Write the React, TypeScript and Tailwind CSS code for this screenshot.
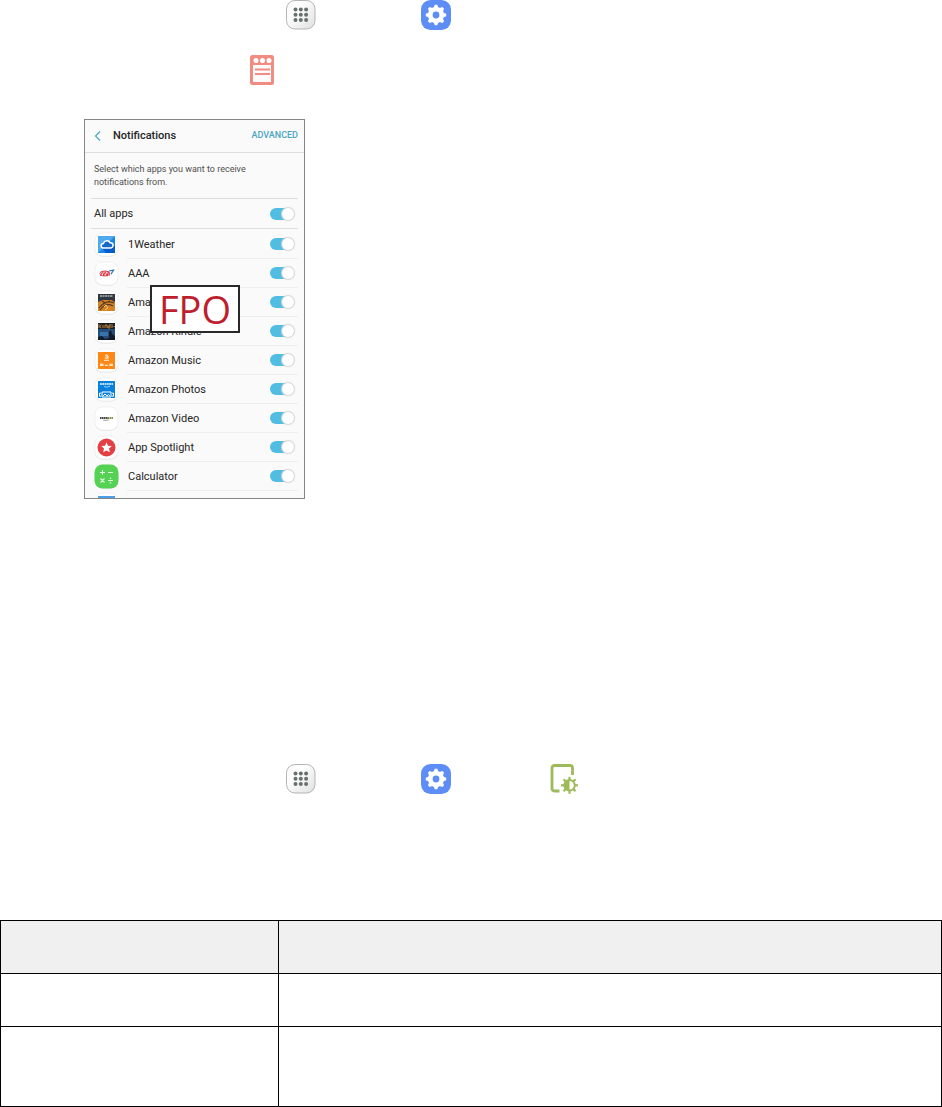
import React, { useState } from 'react';

const AppsIcon: React.FC = () => (
  <svg className="size-[30px]" viewBox="0 0 30 30" role="img" aria-label="Apps">
    <defs>
      <linearGradient id="apps-fill" x1="0" y1="0" x2="1" y2="1">
        <stop offset="0.35" stopColor="#fdfdfd" />
        <stop offset="1" stopColor="#dfe0e0" />
      </linearGradient>
    </defs>
    <rect x="0.5" y="0.5" width="28.5" height="28.5" rx="8.5" fill="url(#apps-fill)" stroke="#adadad" strokeWidth=".9" />
    {[9.7, 15, 20.3].map(y =>
      [9.7, 15, 20.3].map(x => (
        <circle key={`${x}-${y}`} cx={x - 0.2} cy={y - 0.3} r="2" fill="#66716c" />
      ))
    )}
  </svg>
);

const SettingsIcon: React.FC = () => (
  <svg className="size-[30px]" viewBox="0 0 30 30" role="img" aria-label="Settings">
    <rect width="30" height="30" rx="9.5" fill="#5f8df6" />
    <g fill="#fff">
      {[0, 45, 90, 135].map(angle => (
        <path
          key={angle}
          d="M13.8 4.8h2.4l1.4 3.4v13.6l-1.4 3.4h-2.4l-1.4-3.4V8.2z"
          transform={`rotate(${angle} 15 15)`}
        />
      ))}
      <circle cx="15" cy="15" r="8.1" />
    </g>
    <circle cx="15" cy="15" r="3.4" fill="#5f8df6" />
  </svg>
);

const NotificationsIcon: React.FC = () => (
  <svg className="h-[30px] w-6" viewBox="0 0 24 30" role="img" aria-label="Notifications">
    <rect width="24" height="30" rx="2.5" fill="#f28b82" />
    <path d="M3 10h18v17H3z" fill="#fcfafa" />
    <g fill="#fff">
      <circle cx="6" cy="5.5" r="2.5" />
      <circle cx="12.5" cy="5.5" r="2.5" />
      <circle cx="19" cy="5.5" r="2.5" />
    </g>
    <path d="M5 14.5h15M5 19h15" stroke="#f28b82" strokeWidth="2.2" />
  </svg>
);

const DisplayIcon: React.FC = () => (
  <svg className="h-[30px] w-[29px]" viewBox="0 0 29 30" role="img" aria-label="Display">
    <path
      d="M9.5 27H4.5Q2 27 2 24.5V4Q2 1.5 4.5 1.5H20Q22.5 1.5 22.5 4V11"
      fill="none"
      stroke="#9dbb59"
      strokeWidth="2.8"
    />
    <g stroke="#9dbb59" strokeWidth="2.2">
      {[0, 45, 90, 135].map(angle => (
        <path key={angle} d="M19.5 12.8v17" transform={`rotate(${angle} 19.5 21.3)`} />
      ))}
    </g>
    <circle cx="19.5" cy="21.3" r="6.2" fill="#9dbb59" />
    <path d="M19.5 17a4.3 4.3 0 0 1 0 8.6z" fill="#fff" />
  </svg>
);

const Cloud = () => (
  <>
    <path d="M4 4h17v17H4z" fill="#1786e8" />
    <path d="M4 4h17L4 21z" fill="#50a9ed" />
    <path d="M10 12l11 2v7h-9l-3-4z" fill="#075bc8" />
    <path
      d="M9.5 16a2.3 2.3 0 0 1-.1-4.6 3.7 3.7 0 0 1 6.8-.6 2.6 2.6 0 1 1 .5 5.2z"
      fill="#1767c6"
      stroke="#fff"
      strokeWidth="1.5"
    />
  </>
);

const Aaa = () => (
  <>
    <g fill="none" stroke="#db3340" strokeWidth="1">
      <ellipse cx="10.8" cy="12.5" rx="4.8" ry="2.4" />
      <path d="M6.5 15l2-4.5L10 15M9.5 15l1.8-4.5 1.7 4.5M13 15l1.3-4.5 1.2 4" />
    </g>
    <path d="M15 10l4.5-.8-2.5 4" fill="none" stroke="#2673b7" strokeWidth="1.2" />
  </>
);

const Appstore = () => (
  <>
    <path d="M4 4h17v17H4z" fill="#303642" />
    <path d="M6 6h13" stroke="#adb3bb" strokeWidth="1.5" strokeDasharray="2 .5" />
    <path d="M4 12l5-2h8l4 2v9H4z" fill="#d38225" />
    <path d="M5 18q7-9 15-5M6 20q6-8 13-4M8 11l3 2 5-2" fill="none" stroke="#553b25" strokeWidth="1.2" />
    <path d="M10 17l2-2 2 3-3 2" fill="none" stroke="#ffca69" />
  </>
);

const Kindle = () => (
  <>
    <path d="M4 4h17v17H4z" fill="#244d7c" />
    <path d="M4 4h17v6H4z" fill="#182026" />
    <path
      d="M5 5v4M7.5 6L5.5 7.5 7.5 9M9 6v3M11 9V6h2v3M16 5v4h-2V7h2M18 5v4M19.5 7.5H21"
      fill="none"
      stroke="#d18a38"
      strokeWidth=".9"
    />
    <path d="M6 13h8v4H6z" fill="#3774ac" />
    <path d="M4 21v-3l4-1 3 3 4-1v-6l2-2 1 4 3 2v4z" fill="#111b2a" />
  </>
);

const Music = () => (
  <>
    <path d="M4 4h17v17H4z" fill="#ff8716" />
    <path d="M11 7.3q3-1.2 3 .8v2.7M14 8.8q-3-.2-3 .9t3 .3M10 12.3h5" fill="none" stroke="#fff0df" />
    <path d="M6 15.5h3.5V18H6zM10.8 16.8h3V18h-3zM15.2 15.8H19V18h-3.8z" fill="#ffe3c6" />
  </>
);

const Photos = () => (
  <>
    <path d="M4 4h17v17H4z" fill="#0880dc" />
    <path d="M6 7h13" stroke="#bce1fa" strokeWidth="2.2" strokeDasharray="1.8 .5" />
    <path d="M10 9.5q3 1.5 6-.3" fill="none" stroke="#bce1fa" strokeWidth=".8" />
    <path
      d="M8 15h9v5H8zM7 16.2H5.5v3H7M18 16.2h1.5v3H18M9 19l2-2 2 2 1.5-1.5L16 19"
      fill="none"
      stroke="#fff"
      strokeWidth="1"
    />
  </>
);

const Video = () => (
  <>
    <path d="M4 4h17v17H4z" fill="#fff" />
    <path d="M6 12h8" stroke="#454545" strokeWidth="2" strokeDasharray="1.6 .4" />
    <path d="M14 12h5" stroke="#84964b" strokeWidth="2" strokeDasharray="1.6 .4" />
    <path d="M9 14q3 1 6-.3" fill="none" stroke="#8c8c8c" strokeWidth=".8" />
  </>
);

const Spotlight = () => (
  <>
    <circle cx="12.5" cy="12.5" r="9" fill="#e43f42" />
    <path
      d="M12.5 7.3l1.5 3.4 3.8.4-2.8 2.5.8 3.7-3.3-1.9-3.3 1.9.8-3.7-2.8-2.5 3.8-.4z"
      fill="#fff"
    />
  </>
);

const Calculator = () => (
  <>
    <rect x=".5" y=".5" width="24" height="24" rx="8" fill="#55d154" />
    <path
      d="M6 8.5h5M8.5 6v5M14 8.5h5M6.5 14.5l4 4M10.5 14.5l-4 4M14 16.5h5"
      stroke="#e3ffe0"
      strokeWidth="1.1"
    />
    <circle cx="16.5" cy="14.3" r=".8" fill="#e3ffe0" />
    <circle cx="16.5" cy="18.7" r=".8" fill="#e3ffe0" />
  </>
);

interface AppEntry {
  name: string;
  Art: React.FC;
}

const APPS: AppEntry[] = [
  { name: '1Weather', Art: Cloud },
  { name: 'AAA', Art: Aaa },
  { name: 'Amazon Appstore', Art: Appstore },
  { name: 'Amazon Kindle', Art: Kindle },
  { name: 'Amazon Music', Art: Music },
  { name: 'Amazon Photos', Art: Photos },
  { name: 'Amazon Video', Art: Video },
  { name: 'App Spotlight', Art: Spotlight },
  { name: 'Calculator', Art: Calculator },
];

const AppTile: React.FC<{ children: React.ReactNode }> = ({ children }) => (
  <svg className="size-[25px] shrink-0" viewBox="0 0 25 25" aria-hidden="true">
    <rect x="1" y="1.5" width="23" height="23" rx="7.5" fill="#ddd" />
    <rect x="1" y="1" width="23" height="23" rx="7.5" fill="#fff" stroke="#e9e9e9" strokeWidth=".6" />
    {children}
  </svg>
);

const Toggle: React.FC<{ id: string }> = ({ id }) => {
  const [on, setOn] = useState(true);

  return (
    <input
      id={id}
      type="checkbox"
      checked={on}
      onChange={() => setOn(!on)}
      className="flex h-3 w-6 shrink-0 cursor-pointer appearance-none items-center rounded-full bg-gray-300 before:size-3 before:shrink-0 before:rounded-full before:bg-white before:shadow-[0_0_1px_1px_#d4d4d4] checked:justify-end checked:bg-[#52bde2]"
    />
  );
};

const NotificationsScreen: React.FC = () => (
  <section className="relative h-[380px] w-[221px] overflow-hidden border border-[#858585] bg-[#fafafa] font-[Roboto,sans-serif] text-[11px] text-[#252525]">
    <header className="flex h-8 items-center pr-1.5 pl-2">
      <button type="button" aria-label="Back" className="flex w-5">
        <svg className="h-2.5 w-2.5" viewBox="0 0 10 10" fill="none" stroke="#4ba7c6" strokeWidth="1.2">
          <path d="M7 .5L2.5 5 7 9.5" />
        </svg>
      </button>
      <h1 className="font-medium">Notifications</h1>
      <button type="button" className="ml-auto text-[9px] font-medium text-[#4ba5c3]">
        ADVANCED
      </button>
    </header>

    <p className="h-[46px] border-t border-[#dedede] py-2.5 pr-8 pl-[9px] text-[9px] leading-[13px] text-[#505050]">
      Select which apps you want to receive notifications from.
    </p>

    <div className="mx-1.5 flex h-[31px] items-center justify-between border-y border-[#dedede] pr-1 pl-[3px]">
      <label htmlFor="all-apps" className="pt-0.5">All apps</label>
      <Toggle id="all-apps" />
    </div>

    <ul className="pt-px pr-1.5 pl-[9px]">
      {APPS.map(({ name, Art }) => (
        <li key={name} className="flex h-[29px] items-center gap-2">
          <AppTile>
            <Art />
          </AppTile>
          <div className="flex h-full flex-1 items-center justify-between border-b border-[#eeeeee] pr-1 pl-px">
            <label htmlFor={name} className="pt-0.5">{name}</label>
            <Toggle id={name} />
          </div>
        </li>
      ))}
      <li className="flex gap-2 pt-px">
        <AppTile>
          <path d="M4 4h17v17H4z" fill="#4c9fe7" />
        </AppTile>
      </li>
    </ul>

    {/* Placeholder stamp over the list */}
    <div className="absolute top-[165px] left-[65px] flex h-12 w-[90px] items-center justify-center border-2 border-[#292929] bg-white font-['Open_Sans',sans-serif] text-[38px] text-[#be1e2d]">
      FPO
    </div>
  </section>
);

const App: React.FC = () => (
  <main className="w-full bg-white">
    <div className="flex gap-[105px] pl-[286px]">
      <AppsIcon />
      <SettingsIcon />
    </div>

    <div className="pt-[25px] pl-[250px]">
      <NotificationsIcon />
    </div>

    <div className="pt-[34px] pl-[84px]">
      <NotificationsScreen />
    </div>

    <div className="flex pt-[265px] pl-[286px]">
      <AppsIcon />
      <div className="flex gap-[99px] pl-[105px]">
        <SettingsIcon />
        <DisplayIcon />
      </div>
    </div>

    <table className="mt-[126px] w-full table-fixed border-collapse">
      <colgroup>
        <col className="w-[278px]" />
        <col />
      </colgroup>
      <thead>
        <tr className="h-[53px] bg-[#f0f0f0]">
          <th className="border border-black" />
          <th className="border border-black" />
        </tr>
      </thead>
      <tbody>
        <tr className="h-[53px]">
          <td className="border border-black" />
          <td className="border border-black" />
        </tr>
        <tr className="h-20">
          <td className="border border-black" />
          <td className="border border-black" />
        </tr>
      </tbody>
    </table>
  </main>
);

export default App;
